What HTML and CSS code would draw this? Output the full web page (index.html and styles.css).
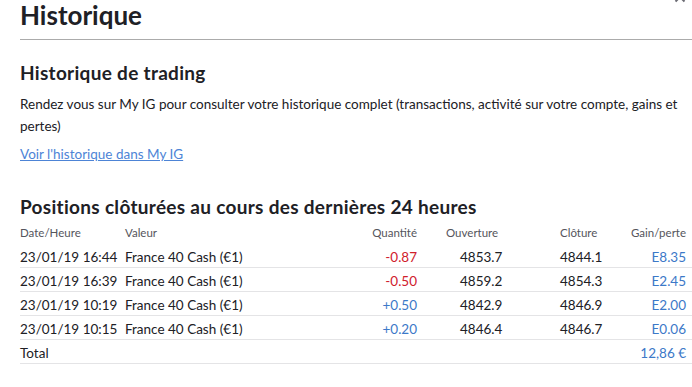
FILE: index.html
```html
<!DOCTYPE html>
<html lang="fr">
<head>
<meta charset="utf-8">
<title>Historique</title>
<link rel="stylesheet" href="styles.css">
</head>
<body>
<div class="dialog">
  <button class="close" aria-label="Fermer">
    <svg width="12" height="12" viewBox="0 0 12 12"><path d="M1.5 1.5 L10.5 10.5 M10.5 1.5 L1.5 10.5" stroke="#6b6b73" stroke-width="2" fill="none"/></svg>
  </button>
  <header class="dialog-header">
    <h1 class="dialog-title">Historique</h1>
  </header>
  <div class="dialog-body">
    <section class="trading">
      <h2 class="section-title">Historique de trading</h2>
      <p class="intro">Rendez vous sur My IG pour consulter votre historique complet (transactions, activité sur votre compte, gains et pertes)</p>
      <p class="more"><a class="link" href="#">Voir l'historique dans My IG</a></p>
    </section>
    <section class="positions">
      <h2 class="section-title">Positions clôturées au cours des dernières 24 heures</h2>
      <table class="grid">
        <colgroup>
          <col class="w-date">
          <col class="w-val">
          <col class="w-qty">
          <col class="w-open">
          <col class="w-close">
          <col class="w-pl">
        </colgroup>
        <thead>
          <tr>
            <th class="c-date">Date/Heure</th>
            <th class="c-val">Valeur</th>
            <th class="c-qty">Quantité</th>
            <th class="c-open">Ouverture</th>
            <th class="c-close">Clôture</th>
            <th class="c-pl">Gain/perte</th>
          </tr>
        </thead>
        <tbody>
          <tr>
            <td class="c-date">23/01/19 16:44</td>
            <td class="c-val">France 40 Cash (€1)</td>
            <td class="c-qty neg">-0.87</td>
            <td class="c-open">4853.7</td>
            <td class="c-close">4844.1</td>
            <td class="c-pl pos">E8.35</td>
          </tr>
          <tr>
            <td class="c-date">23/01/19 16:39</td>
            <td class="c-val">France 40 Cash (€1)</td>
            <td class="c-qty neg">-0.50</td>
            <td class="c-open">4859.2</td>
            <td class="c-close">4854.3</td>
            <td class="c-pl pos">E2.45</td>
          </tr>
          <tr>
            <td class="c-date">23/01/19 10:19</td>
            <td class="c-val">France 40 Cash (€1)</td>
            <td class="c-qty pos">+0.50</td>
            <td class="c-open">4842.9</td>
            <td class="c-close">4846.9</td>
            <td class="c-pl pos">E2.00</td>
          </tr>
          <tr>
            <td class="c-date">23/01/19 10:15</td>
            <td class="c-val">France 40 Cash (€1)</td>
            <td class="c-qty pos">+0.20</td>
            <td class="c-open">4846.4</td>
            <td class="c-close">4846.7</td>
            <td class="c-pl pos">E0.06</td>
          </tr>
          <tr class="total">
            <td class="c-date">Total</td>
            <td></td>
            <td></td>
            <td></td>
            <td></td>
            <td class="c-pl pos">12,86 €</td>
          </tr>
        </tbody>
      </table>
    </section>
  </div>
</div>
</body>
</html>
```

FILE: styles.css
```css
html, body {
  margin: 0;
  padding: 0;
  background: #ffffff;
}
body {
  font-family: Lato, "Open Sans", sans-serif;
  color: #202025;
  overflow: hidden;
}
.dialog {
  position: relative;
  width: 692px;
  height: 387px;
}
.close {
  position: absolute;
  top: -9px;
  right: 6px;
  border: 0;
  background: none;
  padding: 0;
  width: 12px;
  height: 12px;
  cursor: pointer;
}
.close svg {
  display: block;
}
.dialog-header {
  margin-left: 20px;
  height: 40px;
  border-bottom: 1px solid #ababab;
  box-sizing: border-box;
}
.dialog-title {
  margin: 0;
  font-size: 26px;
  line-height: 30px;
  font-weight: 700;
}
.dialog-body {
  padding: 0 0 0 20px;
}
.section-title {
  margin: 0;
  font-size: 19px;
  line-height: 24px;
  font-weight: 700;
  letter-spacing: 0.3px;
}
.trading {
  padding-top: 21px;
}
.intro {
  margin: 8px 0 0;
  padding-right: 5px;
  font-size: 13.5px;
  line-height: 22px;
}
.more {
  margin: 7px 0 0;
  font-size: 13.5px;
  line-height: 20px;
}
.link {
  color: #4d84d6;
  text-decoration: underline;
}
.positions {
  padding-top: 31px;
}
.grid {
  width: 672px;
  table-layout: fixed;
  border-collapse: collapse;
  font-size: 13.5px;
}
.w-date { width: 105px; }
.w-val { width: 200px; }
.w-qty { width: 92px; }
.w-open { width: 100px; }
.w-close { width: 100px; }
.w-pl { width: 75px; }
.grid th {
  font-size: 11.5px;
  font-weight: 400;
  color: #55555c;
  line-height: 14px;
  padding: 7px 0 4px;
  white-space: nowrap;
}
.grid td {
  padding: 3px 0 0;
  line-height: 20px;
  border-bottom: 1px solid #e4e4e6;
  white-space: nowrap;
}
.c-date, .c-val { text-align: left; }
.c-qty { text-align: right; }
.grid th.c-open { text-align: left; padding-left: 29px; }
.grid td.c-open { text-align: left; padding-left: 43px; }
.grid th.c-close, .grid td.c-close { text-align: left; padding-left: 43px; }
.grid th.c-pl, .grid td.c-pl { text-align: right; padding-right: 6px; }
.neg { color: #d0202c; }
.pos { color: #3c79c8; }
```
